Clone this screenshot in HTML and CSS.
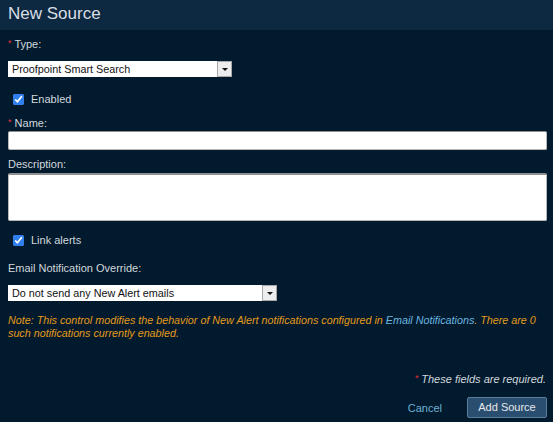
FILE: index.html
```html
<!DOCTYPE html>
<html>
<head>
<meta charset="utf-8">
<link rel="stylesheet" href="styles.css">
</head>
<body>
<div class="dialog">
  <div class="header">New Source</div>
  <div class="content">
    <div class="label lbl-type"><span class="req">*</span> <span>Type:</span></div>
    <div class="select sel-type"><span class="sel-text">Proofpoint Smart Search</span><span class="sel-arrow"><span class="tri"></span></span></div>
    <label class="check chk-enabled"><input type="checkbox" checked><span>Enabled</span></label>
    <div class="label lbl-name"><span class="req">*</span> <span>Name:</span></div>
    <div class="input"></div>
    <div class="label lbl-desc">Description:</div>
    <div class="textarea"></div>
    <label class="check chk-link"><input type="checkbox" checked><span>Link alerts</span></label>
    <div class="label lbl-email">Email Notification Override:</div>
    <div class="select sel-email"><span class="sel-text">Do not send any New Alert emails</span><span class="sel-arrow"><span class="tri"></span></span></div>
    <div class="note">
      <div class="note-line"><span>Note: This control modifies the behavior of New Alert notifications configured in </span><span class="link">Email Notifications</span><span>. There are 0</span></div>
      <div class="note-line">such notifications currently enabled.</div>
    </div>
    <div class="required"><span class="req">*</span> <span>These fields are required.</span></div>
    <div class="buttons">
      <span class="cancel">Cancel</span>
      <span class="btn">Add Source</span>
    </div>
  </div>
</div>
</body>
</html>
```
FILE: styles.css
```css
html, body {
  margin: 0;
  padding: 0;
  background: #021a2d;
}
body {
  width: 553px;
  height: 422px;
  overflow: hidden;
  font-family: "Liberation Sans", Arial, sans-serif;
  font-size: 11px;
  color: #d2d8de;
}
.header {
  height: 30px;
  background: #0d2941;
  color: #d9dee3;
  font-size: 17px;
  line-height: 28px;
  padding-left: 8px;
  box-sizing: border-box;
}
.content {
  padding: 0 6px 0 8px;
  display: flex;
  flex-direction: column;
}
.label {
  line-height: 14px;
  height: 14px;
}
.req {
  color: #e0303a;
  font-size: 9px;
  position: relative;
  top: -2px;
}
.lbl-type { margin-top: 7px; }
.select {
  display: flex;
  background: #fff;
  height: 16px;
  box-sizing: border-box;
  color: #111;
  align-items: center;
}
.sel-type { width: 224px; margin-top: 10px; }
.sel-email { width: 269px; margin-top: 10px; }
.sel-text {
  flex: 1;
  padding-left: 4px;
  line-height: 16px;
  font-size: 10.8px;
}
.sel-arrow {
  width: 15px;
  height: 16px;
  box-sizing: border-box;
  background: #ededed;
  border: 1px solid #a9a9a9;
  display: flex;
  align-items: center;
  justify-content: center;
}
.tri {
  width: 0;
  height: 0;
  border-left: 3px solid transparent;
  border-right: 3px solid transparent;
  border-top: 3px solid #111;
}
.check {
  display: flex;
  align-items: center;
  height: 14px;
  line-height: 14px;
  padding-left: 5px;
}
.check input {
  width: 11px;
  height: 11px;
  margin: 0 7px 0 0;
  accent-color: #2f7ff0;
}
.chk-enabled { margin-top: 15px; }
.lbl-name { margin-top: 10px; }
.input {
  margin-top: 1px;
  height: 19px;
  width: 539px;
  box-sizing: border-box;
  background: #fff;
  border: 1px solid #b8b8b8;
  border-top-color: #8f8f8f;
  border-radius: 2px;
}
.lbl-desc { margin-top: 7px; }
.textarea {
  margin-top: 2px;
  height: 48px;
  width: 539px;
  box-sizing: border-box;
  background: #fff;
  border: 1px solid #b8b8b8;
  border-top: 2px solid #8f8f8f;
  border-radius: 2px;
}
.chk-link { margin-top: 12px; }
.lbl-email { margin-top: 14px; }
.note {
  margin-top: 13px;
  font-style: italic;
  font-size: 10.75px;
  color: #e49a1c;
  line-height: 13px;
  width: 539px;
}
.note-line { white-space: nowrap; }
.link { color: #6cb6e0; }
.required {
  margin-top: 32px;
  text-align: right;
  font-style: italic;
  line-height: 14px;
  padding-right: 1px;
  color: #d2d8de;
}
.buttons {
  margin-top: 10px;
  display: flex;
  justify-content: flex-end;
  align-items: center;
  gap: 25px;
}
.cancel {
  color: #6cb0d6;
}
.btn {
  width: 80px;
  height: 21px;
  box-sizing: border-box;
  background: #2a4e6f;
  border: 1px solid #5c7d9a;
  border-radius: 2px;
  color: #e6e9ec;
  text-align: center;
  line-height: 19px;
}
```
